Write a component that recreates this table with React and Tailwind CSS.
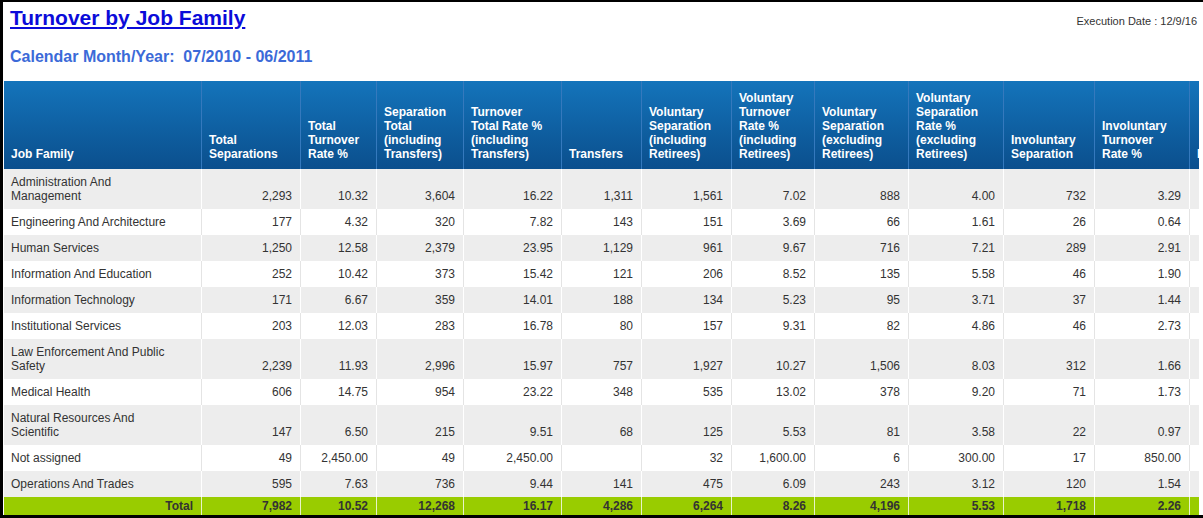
import React from "react";

const COLS = [198, 99, 76, 87, 98, 80, 90, 83, 94, 95, 91, 95, 80];

const HEADERS = [
  ["Job Family"],
  ["Total", "Separations"],
  ["Total", "Turnover", "Rate %"],
  ["Separation", "Total", "(including", "Transfers)"],
  ["Turnover", "Total Rate %", "(including", "Transfers)"],
  ["Transfers"],
  ["Voluntary", "Separation", "(including", "Retirees)"],
  ["Voluntary", "Turnover", "Rate %", "(including", "Retirees)"],
  ["Voluntary", "Separation", "(excluding", "Retirees)"],
  ["Voluntary", "Separation", "Rate %", "(excluding", "Retirees)"],
  ["Involuntary", "Separation"],
  ["Involuntary", "Turnover", "Rate %"],
  ["F"],
];

// last column is cut off by the window edge, so its values stay empty
const ROWS = [
  [["Administration And", "Management"], "2,293", "10.32", "3,604", "16.22", "1,311", "1,561", "7.02", "888", "4.00", "732", "3.29", ""],
  [["Engineering And Architecture"], "177", "4.32", "320", "7.82", "143", "151", "3.69", "66", "1.61", "26", "0.64", ""],
  [["Human Services"], "1,250", "12.58", "2,379", "23.95", "1,129", "961", "9.67", "716", "7.21", "289", "2.91", ""],
  [["Information And Education"], "252", "10.42", "373", "15.42", "121", "206", "8.52", "135", "5.58", "46", "1.90", ""],
  [["Information Technology"], "171", "6.67", "359", "14.01", "188", "134", "5.23", "95", "3.71", "37", "1.44", ""],
  [["Institutional Services"], "203", "12.03", "283", "16.78", "80", "157", "9.31", "82", "4.86", "46", "2.73", ""],
  [["Law Enforcement And Public", "Safety"], "2,239", "11.93", "2,996", "15.97", "757", "1,927", "10.27", "1,506", "8.03", "312", "1.66", ""],
  [["Medical Health"], "606", "14.75", "954", "23.22", "348", "535", "13.02", "378", "9.20", "71", "1.73", ""],
  [["Natural Resources And", "Scientific"], "147", "6.50", "215", "9.51", "68", "125", "5.53", "81", "3.58", "22", "0.97", ""],
  [["Not assigned"], "49", "2,450.00", "49", "2,450.00", "", "32", "1,600.00", "6", "300.00", "17", "850.00", ""],
  [["Operations And Trades"], "595", "7.63", "736", "9.44", "141", "475", "6.09", "243", "3.12", "120", "1.54", ""],
];

const TOTAL = ["Total", "7,982", "10.52", "12,268", "16.17", "4,286", "6,264", "8.26", "4,196", "5.53", "1,718", "2.26", ""];

function Lines({ lines }) {
  return lines.map((l, i) => (
    <React.Fragment key={i}>
      {i > 0 && <br />}
      {l}
    </React.Fragment>
  ));
}

export default function App() {
  return (
    <div
      className="w-[1203px] h-[518px] bg-white border-l-[3px] border-t-2 border-b-[3px] border-black overflow-hidden"
      style={{ fontFamily: '"Liberation Sans", Arial, sans-serif' }}
    >
      <div className="flex justify-between items-start pl-[7px] pt-1 pr-[6px]">
        <a href="#" className="text-[21px] leading-6 font-bold text-[#0b0bd9] underline">
          Turnover by Job Family
        </a>
        <span className="pt-2 text-[11px] leading-[14px] text-[#333]">Execution Date : 12/9/16</span>
      </div>

      <div className="pl-[7px] mt-[17px] text-[16px] leading-5 font-bold text-[#3b6ad8] whitespace-pre">
        {"Calendar Month/Year:  07/2010 - 06/2011"}
      </div>

      <div className="mt-[14px] ml-px w-[1195px] overflow-hidden">
        <table className="table-fixed w-[1266px] border-separate border-spacing-0 text-[12px] leading-[14px]">
          <colgroup>
            {COLS.map((w, i) => (
              <col key={i} style={{ width: w }} />
            ))}
          </colgroup>
          <thead>
            <tr>
              {HEADERS.map((h, i) => (
                <th
                  key={i}
                  className="h-[88px] align-bottom text-left font-bold text-white pl-[7px] pr-1 pb-2 bg-gradient-to-b from-[#1474bb] to-[#0b4f8d] border-r border-[#3579bd]"
                >
                  <Lines lines={h} />
                </th>
              ))}
            </tr>
          </thead>
          <tbody className="text-[#333]">
            {ROWS.map((r, ri) => {
              const grey = ri % 2 === 0;
              return (
                <tr key={ri} className={grey ? "bg-[#ededed]" : "bg-white"}>
                  {r.map((c, ci) => (
                    <td
                      key={ci}
                      className={`align-bottom py-[6px] border-r ${grey ? "border-white" : "border-[#e4e4e4]"} ${
                        ci === 0 ? "text-left pl-[7px]" : "text-right pr-2"
                      }`}
                    >
                      {ci === 0 ? <Lines lines={c} /> : c}
                    </td>
                  ))}
                </tr>
              );
            })}
            <tr className="bg-[#99cc00] font-bold">
              {TOTAL.map((c, ci) => (
                <td key={ci} className="text-right pr-2 py-[2px] border-r border-[#e8f3c8]">
                  {c}
                </td>
              ))}
            </tr>
          </tbody>
        </table>
      </div>
    </div>
  );
}
